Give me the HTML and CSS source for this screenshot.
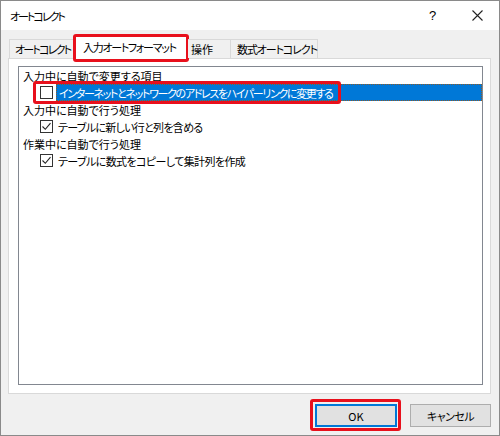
FILE: index.html
```html
<!DOCTYPE html>
<html lang="ja">
<head>
<meta charset="utf-8">
<link rel="stylesheet" href="styles.css">
</head>
<body>
<div class="window">
  <div class="titlebar">
    <span class="title">オートコレクト</span>
    <span class="help">?</span>
    <span class="close"><svg width="11" height="11" viewBox="0 0 11 11"><path d="M0.5 0.5 L10.5 10.5 M10.5 0.5 L0.5 10.5" stroke="#222" stroke-width="1.1" fill="none"/></svg></span>
  </div>
  <div class="body">
    <div class="tabs">
      <div class="tab t1">オートコレクト</div>
      <div class="tab t2 active">入力オートフォーマット<div class="redbox tabmark"></div></div>
      <div class="tab t3">操作</div>
      <div class="tab t4">数式オートコレクト</div>
    </div>
    <div class="panel">
      <div class="list">
        <div class="row head">入力中に自動で変更する項目</div>
        <div class="row item">
          <span class="cb"></span>
          <span class="label selected">インターネットとネットワークのアドレスをハイパーリンクに変更する</span>
          <div class="redbox rowmark"></div>
        </div>
        <div class="row head">入力中に自動で行う処理</div>
        <div class="row item">
          <span class="cb"><svg width="11" height="11" viewBox="0 0 11 11"><path d="M1.5 5.5 L4.3 8.3 L9.5 2.2" stroke="#222" stroke-width="1.1" fill="none"/></svg></span>
          <span class="label l2">テーブルに新しい行と列を含める</span>
        </div>
        <div class="row head">作業中に自動で行う処理</div>
        <div class="row item">
          <span class="cb"><svg width="11" height="11" viewBox="0 0 11 11"><path d="M1.5 5.5 L4.3 8.3 L9.5 2.2" stroke="#222" stroke-width="1.1" fill="none"/></svg></span>
          <span class="label l3">テーブルに数式をコピーして集計列を作成</span>
        </div>
      </div>
    </div>
    <div class="buttons">
      <div class="btn ok">OK<div class="redbox okmark"></div></div>
      <div class="btn cancel">キャンセル</div>
    </div>
  </div>
</div>
</body>
</html>
```
FILE: styles.css
```css
* { box-sizing: border-box; }
html, body { margin: 0; padding: 0; }
body {
  width: 500px;
  height: 436px;
  font-family: "Noto Sans CJK JP", "Noto Sans", sans-serif;
  font-size: 11px;
  font-feature-settings: "palt";
  color: #000;
  background: #fff;
}
.window {
  width: 500px;
  height: 436px;
  border: 1px solid #8a8a8a;
  background: #f0f0f0;
  display: flex;
  flex-direction: column;
}
.titlebar {
  height: 29px;
  background: #fff;
  display: flex;
  align-items: center;
  padding-left: 9px;
  flex: none;
}
.title { flex: 1; letter-spacing: -2px; }
.help {
  font-family: "Liberation Sans", sans-serif;
  font-size: 13px;
  width: 10px;
  margin-right: 33px;
}
.close {
  width: 11px;
  height: 11px;
  margin-right: 16px;
  display: flex;
}
.body {
  flex: 1;
  display: flex;
  flex-direction: column;
  padding: 5px 8px 0 7px;
}
.tabs {
  display: flex;
  align-items: flex-end;
  height: 23px;
  padding-left: 1px;
  position: relative;
  z-index: 1;
}
.tab {
  height: 19px;
  border: 1px solid #d9d9d9;
  border-bottom: none;
  background: #f0f0f0;
  display: flex;
  align-items: center;
  justify-content: flex-start;
  position: relative;
  white-space: nowrap;
  line-height: 1;
}
.t1 { width: 65px; padding-left: 5px; letter-spacing: -1.8px; border-right: none; }
.t2 { width: 114px; height: 24px; padding-left: 8px; background: #fff; margin-bottom: -1px; padding-bottom: 1px; letter-spacing: -1.3px; }
.t3 { width: 42px; padding-left: 3px; border-left: none; border-right: none; }
.t4 { width: 88px; padding-left: 6px; letter-spacing: -1.1px; }
.panel {
  height: 336px;
  background: #fff;
  border: 1px solid #d9d9d9;
  padding: 7px 7px 8px 9px;
  display: flex;
}
.list {
  flex: 1;
  border: 1px solid #828790;
  background: #fff;
  position: relative;
}
.row {
  height: 17px;
  display: flex;
  align-items: center;
  white-space: nowrap;
  position: relative;
}
.head { padding-left: 4px; }
.item { padding-left: 21px; }
.cb {
  width: 13px;
  height: 13px;
  border: 1px solid #333;
  background: #fff;
  display: flex;
  align-items: center;
  justify-content: center;
  flex: none;
  margin-right: 3px;
}
.label {
  padding-left: 2px;
  height: 17px;
  display: flex;
  align-items: center;
}
.l2 { letter-spacing: -0.7px; }
.l3 { letter-spacing: -0.6px; }
.selected {
  flex: 1;
  background: #0078d7;
  color: #fff;
  border: 1px dotted #8a5a2a;
  letter-spacing: -1.35px;
}
.redbox {
  position: absolute;
  border: 3px solid #e8101c;
  border-radius: 3px;
  pointer-events: none;
}
.tabmark { left: -2px; right: -2px; top: -2px; bottom: -3px; }
.rowmark { left: 14px; top: -3px; width: 308px; height: 23px; }
.buttons {
  display: flex;
  justify-content: flex-end;
  gap: 13px;
  margin-top: 10px;
}
.btn {
  width: 81px;
  height: 23px;
  background: #e1e1e1;
  border: 1px solid #adadad;
  display: flex;
  align-items: center;
  justify-content: center;
  position: relative;
}
.cancel { letter-spacing: -0.5px; }
.ok {
  width: 82px;
  border: 2px solid #0078d7;
}
.okmark { left: -7px; right: -6px; top: -7px; bottom: -6px; }
```
